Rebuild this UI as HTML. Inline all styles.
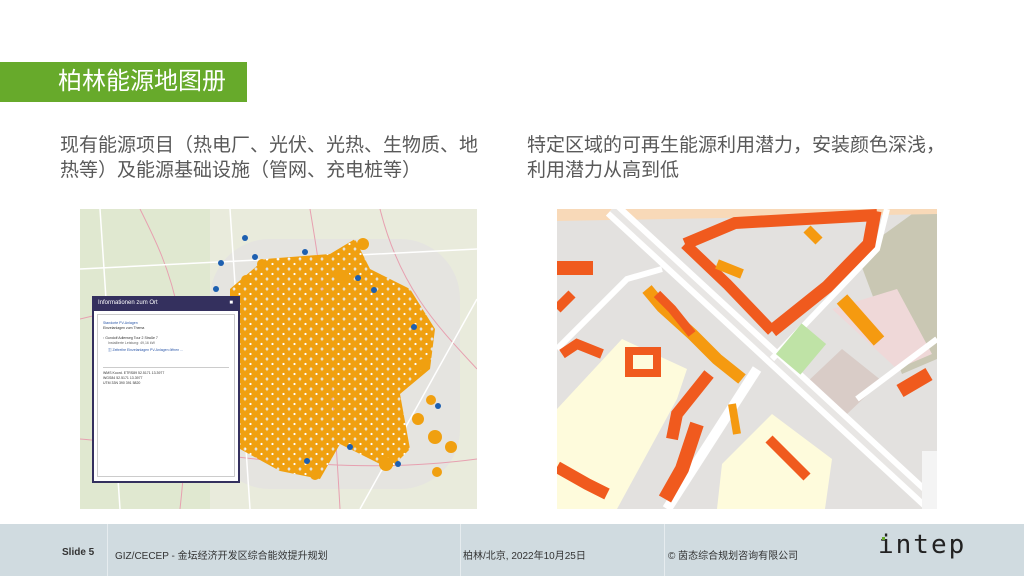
<!DOCTYPE html>
<html><head><meta charset="utf-8"><style>
*{margin:0;padding:0;box-sizing:border-box}
body{width:1024px;height:576px;position:relative;background:#fff;font-family:"Liberation Sans","Noto Sans CJK SC",sans-serif;overflow:hidden}
.title{position:absolute;left:0;top:62px;width:247px;height:40px;background:#67aa2b;color:#fff;font-size:24px;line-height:40px;padding-left:58px}
.p{position:absolute;top:133px;font-size:19px;line-height:25px;color:#595959}
.map{position:absolute;overflow:hidden}
.foot{position:absolute;left:0;top:524px;width:1024px;height:52px;background:#d0dbe0;font-size:10px;color:#333}
.foot span{position:absolute;top:23px}
.sep{position:absolute;top:0;width:1px;height:52px;background:#e6ecef}
</style></head><body>
<div class="title">柏林能源地图册</div>
<div class="p" style="left:60px;width:428px">现有能源项目（热电厂、光伏、光热、生物质、地热等）及能源基础设施（管网、充电桩等）</div>
<div class="p" style="left:527px;width:428px">特定区域的可再生能源利用潜力，安装颜色深浅，利用潜力从高到低</div>

<div class="map" style="left:80px;top:209px;width:397px;height:300px;background:#e9ebdc">
<svg width="397" height="300">
<defs>
<pattern id="dots" width="11" height="10" patternUnits="userSpaceOnUse">
<circle cx="5.5" cy="5" r="6.2" fill="#f0a010"/><circle cx="5.5" cy="5" r="1.1" fill="#fff"/>
</pattern>
<clipPath id="blob"><polygon points="150,80 185,50 250,45 275,30 290,60 330,80 355,120 350,160 320,185 330,240 310,260 260,235 240,270 200,262 160,240 150,200"/></clipPath>
</defs>
<rect x="0" y="0" width="130" height="300" fill="#e0e8d0"/>
<rect x="130" y="30" width="250" height="250" fill="#e5e4e0" rx="60"/>
<path d="M0,110 C80,90 150,100 230,70 M60,0 C90,60 120,120 100,300 M230,0 C240,60 250,120 260,300 M300,0 C320,80 360,120 397,160 M0,230 C120,240 250,270 397,250" stroke="#e7a0b0" stroke-width="1" fill="none"/>
<path d="M20,0 L40,300 M0,60 L397,40 M150,0 L170,300 M397,90 L280,300" stroke="#ffffff" stroke-width="1.5" fill="none"/>
<rect x="0" y="0" width="397" height="300" fill="url(#dots)" clip-path="url(#blob)"/>
<g fill="#f0a010"><circle cx="283" cy="35" r="6"/><circle cx="263" cy="68" r="7"/><circle cx="355" cy="228" r="7"/><circle cx="371" cy="238" r="6"/><circle cx="357" cy="263" r="5"/><circle cx="338" cy="210" r="6"/><circle cx="343" cy="156" r="6"/><circle cx="351" cy="191" r="5"/><circle cx="182" cy="55" r="5"/><circle cx="166" cy="71" r="5"/><circle cx="306" cy="255" r="7"/><circle cx="235" cy="266" r="5"/></g>
<g fill="#1d5fb0"><circle cx="165" cy="29" r="3"/><circle cx="225" cy="43" r="3"/><circle cx="141" cy="54" r="3"/><circle cx="175" cy="48" r="3"/><circle cx="136" cy="80" r="3"/><circle cx="294" cy="81" r="3"/><circle cx="278" cy="69" r="3"/><circle cx="358" cy="197" r="3"/><circle cx="318" cy="255" r="3"/><circle cx="227" cy="252" r="3"/><circle cx="270" cy="238" r="3"/><circle cx="334" cy="118" r="3"/></g>
</svg>
<div style="position:absolute;left:12px;top:87px;width:148px;height:187px;background:#fff;border:2px solid #34305e;border-top:0">
<div style="background:#34305e;height:15px;color:#fff;font-size:6px;line-height:15px;padding-left:4px">Informationen zum Ort<span style="float:right;margin-right:5px">■</span></div>
<div style="margin:3px;border:1px solid #ccc;height:163px;font-size:3.5px;color:#333;padding:6px 5px;line-height:5px">
<div style="color:#2a56a8">Standorte PV-Anlagen</div><div>Einzelanlagen zum Thema</div><br>
<div>▫ Gundolf Adlerweg Tour 2 Straße 7</div><div style="padding-left:5px;color:#666">Installierte Leistung: 49,16 kW</div>
<div style="padding-left:5px;color:#2a56a8;margin-top:2px">▥ Zeitreihe Einzelanlagen PV-Anlagen öffnen ...</div>
<div style="border-top:1px solid #ccc;margin-top:14px;padding-top:3px">WMS Koord. ETRS89 52.5171 13.3977</div><div>WGS84 52.5171 13.3977</div><div>UTM 33N 390 391 5820</div>
</div></div>
</div>

<div class="map" style="left:557px;top:209px;width:380px;height:300px;background:#e3e1df">
<svg width="380" height="300">
<polygon points="0,200 65,130 130,160 120,190 60,300 0,300" fill="#fefbdc"/>
<polygon points="165,255 215,205 275,250 268,300 160,300" fill="#fefbdc"/>
<polygon points="300,45 362,0 380,0 380,150 345,165" fill="#c9c7b3"/>
<polygon points="248,175 285,140 325,172 290,205" fill="#d9ccc7"/>
<polygon points="275,100 340,80 375,145 340,160" fill="#efd8d8"/>
<polygon points="0,0 380,0 380,5 0,12" fill="#f8d9b8"/>
<path d="M55,0 L380,300" stroke="#fff" stroke-width="18"/>
<path d="M55,0 L380,300" stroke="#e8e6e4" stroke-width="6"/>
<path d="M0,140 L70,70 L105,60" stroke="#fff" stroke-width="6" fill="none"/>
<path d="M200,160 L110,300" stroke="#fff" stroke-width="10"/>
<path d="M215,150 L320,40 L330,0" stroke="#fff" stroke-width="6" fill="none"/>
<path d="M300,190 L380,130" stroke="#fff" stroke-width="6"/>
<g fill="none" stroke-linejoin="miter">
<polyline points="128,35 178,14 320,6" stroke="#f05a1e" stroke-width="12"/>
<polyline points="318,2 312,35 270,78 215,122" stroke="#f05a1e" stroke-width="13"/>
<polyline points="128,35 170,75 215,122" stroke="#f05a1e" stroke-width="11"/>
<polyline points="160,55 185,65" stroke="#f59a10" stroke-width="10"/>
<polyline points="250,20 262,32" stroke="#f59a10" stroke-width="10"/>
<polyline points="90,80 105,98 135,125 160,150 185,170" stroke="#f59a10" stroke-width="12"/>
<polyline points="100,85 115,100 135,125" stroke="#f05a1e" stroke-width="9"/>
<polyline points="152,165 120,205 115,230" stroke="#f05a1e" stroke-width="12"/>
<polyline points="140,215 125,260 108,290" stroke="#f05a1e" stroke-width="14"/>
<polyline points="175,195 180,225" stroke="#f59a10" stroke-width="8"/>
<polyline points="212,230 250,268" stroke="#f05a1e" stroke-width="10"/>
<polyline points="285,90 322,132" stroke="#f59a10" stroke-width="14"/>
<polyline points="343,182 372,165" stroke="#f05a1e" stroke-width="14"/>
<polyline points="0,100 15,85" stroke="#f05a1e" stroke-width="10"/>
<polyline points="5,145 20,135 45,145" stroke="#f05a1e" stroke-width="10"/>
<polyline points="0,258 30,275 50,285" stroke="#f05a1e" stroke-width="12"/>
<rect x="72" y="142" width="28" height="22" stroke="#f05a1e" stroke-width="8"/>
</g>
<rect x="0" y="52" width="36" height="14" fill="#f05a1e"/>
<rect x="228" y="120" width="32" height="40" fill="#bfe3a6" transform="rotate(40 244 140)"/>
<rect x="365" y="242" width="15" height="58" fill="#f4f4f4"/>
</svg>
</div>

<div class="foot">
<span style="left:62px;font-weight:bold">Slide 5</span>
<div class="sep" style="left:107px"></div>
<span style="left:115px">GIZ/CECEP - 金坛经济开发区综合能效提升规划</span>
<div class="sep" style="left:460px"></div>
<span style="left:463px">柏林/北京, 2022年10月25日</span>
<div class="sep" style="left:664px"></div>
<span style="left:668px">© 茵态综合规划咨询有限公司</span>
<span style="left:878px;top:6px;font-size:26px;letter-spacing:2px;color:#222;font-family:'DejaVu Sans Mono','Liberation Mono',monospace">intep</span>
<div style="position:absolute;left:882px;top:13px;width:3px;height:3px;background:#67aa2b"></div>
</div>
</body></html>
